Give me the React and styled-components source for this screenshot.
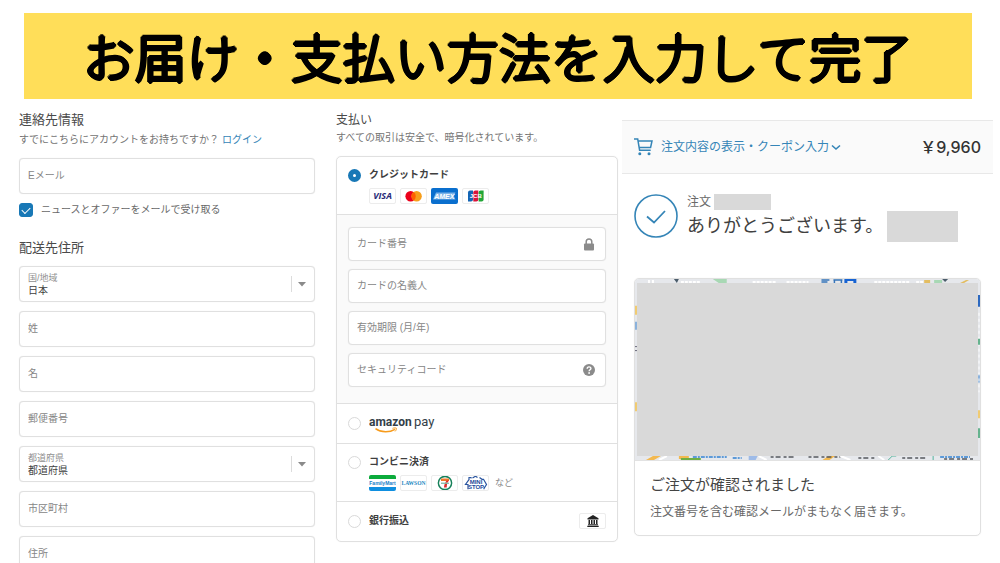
import { useState } from "react";
import styled, { createGlobalStyle } from "styled-components";

const GlobalStyle = createGlobalStyle`
  * {
    box-sizing: border-box;
  }

  body {
    margin: 0;
    background: #fff;
    color: #545454;
    font-family: "Liberation Sans", "Noto Sans CJK JP", sans-serif;
    font-size: 10px;
    line-height: 16px;
  }

  h1, h2, h3, p {
    margin: 0;
    font-weight: 400;
  }

  input, select, button {
    font: inherit;
    color: inherit;
  }
`;

const Page = styled.div`
  height: 100vh;
  overflow: hidden;
`;

const Banner = styled.header`
  margin: 13px 28px 12px 24px;
  padding: 5px 0;
  background: #ffde59;
  text-align: center;

  /* thin strokes thickened on all sides, so the ends come out round */
  h1 {
    font-family: "Noto Sans CJK JP", sans-serif;
    font-size: 52px;
    line-height: 76px;
    font-weight: 300;
    color: #000;
    white-space: nowrap;
    text-shadow: 2px 0 #000, -2px 0 #000, 0 2px #000, 0 -2px #000,
      1px 1px #000, -1px 1px #000, 1px -1px #000, -1px -1px #000;
  }
`;

const Columns = styled.main`
  display: grid;
  grid-template-columns: 317fr 286fr 371fr;
  padding: 0 7px 0 19px;
`;

const Column = styled.section`
  min-width: 0;
  padding-right: ${({ $gap }) => $gap || 0}px;
`;

const Heading = styled.h2`
  font-size: ${({ $small }) => ($small ? 12 : 13)}px;
  line-height: 18px;
  color: #4a4a4a;
  margin-top: ${({ $spaced }) => ($spaced ? 21 : 0)}px;
`;

const SubText = styled.p`
  margin: ${({ $top }) => $top}px 0 10px;
  color: #737373;
  white-space: nowrap;

  a {
    color: #3585b7;
    text-decoration: none;
    margin-left: 3px;
  }
`;

const Field = styled.div`
  display: flex;
  align-items: center;
  height: ${({ $short }) => ($short ? 34 : 36)}px;
  padding: 0 8px;
  border: 1px solid #e0e0e0;
  border-radius: 4px;
  background: #fff;
  box-shadow: 0 0 1px #e4e4e4;

  input {
    flex: 1;
    min-width: 0;
    border: 0;
    padding: 0;
    outline: none;
    background: none;
  }

  input::placeholder {
    color: #868686;
    opacity: 1;
  }

  > svg {
    margin-right: 2px;
  }
`;

const SelectBody = styled.div`
  flex: 1;
  display: flex;
  flex-direction: column;
  padding-top: 2px;

  label {
    font-size: 9px;
    line-height: 12px;
    color: #909090;
  }

  select {
    appearance: none;
    border: 0;
    padding: 0;
    outline: none;
    background: none;
    line-height: 14px;
    color: #3f3f3f;
  }
`;

const SelectArrow = styled.span`
  display: flex;
  align-items: center;
  height: 16px;
  padding-left: 6px;
  border-left: 1px solid #dcdcdc;
`;

const FieldStack = styled.div`
  display: grid;
  gap: ${({ $gap }) => $gap}px;
  margin-top: 9px;
`;

const CheckRow = styled.label`
  display: flex;
  align-items: center;
  gap: 8px;
  margin-top: 8px;
  color: #686868;
`;

const CheckBox = styled.input`
  appearance: none;
  display: grid;
  place-items: center;
  width: 14px;
  height: 14px;
  margin: 0;
  border: 1px solid #d0d0d0;
  border-radius: 3px;

  &:checked {
    background: #1878b6;
    border-color: #1878b6;
  }

  &:checked::after {
    content: "";
    width: 7px;
    height: 4px;
    border: solid #fff;
    border-width: 0 0 1px 1px;
    transform: translateY(-1px) rotate(-45deg);
  }
`;

const PaymentCard = styled.div`
  border: 1px solid #e0e0e0;
  border-radius: 5px;
  box-shadow: 0 0 1px #e4e4e4;
  overflow: hidden;
`;

const Option = styled.div`
  display: grid;
  grid-template-columns: 13px 1fr auto;
  column-gap: 8px;
  row-gap: 5px;
  align-items: center;
  padding: ${({ $compact }) => ($compact ? "11px 11px 12px" : "10px 11px")};

  div + & {
    border-top: 1px solid #e0e0e0;
  }
`;

const Radio = styled.input`
  appearance: none;
  width: 13px;
  height: 13px;
  margin: 0;
  border: 1px solid #d9d9d9;
  border-radius: 50%;
  background: #fff;

  &:checked {
    border: 5px solid #1878b6;
  }
`;

const OptionLabel = styled.label`
  height: 16px;
  font-weight: 700;
  color: #3f3f3f;
`;

const BrandRow = styled.div`
  grid-column: 2 / -1;
  display: flex;
  align-items: center;
  gap: 4px;
`;

const Brand = styled.span`
  display: flex;
  align-items: center;
  justify-content: center;
  width: 27px;
  height: 16px;
  overflow: hidden;
  border: ${({ $plain }) => ($plain ? "0" : "1px solid #ececec")};
  border-radius: 2px;
  background: #fff;
`;

const BrandNote = styled.span`
  margin-left: 2px;
  font-size: 9px;
  color: #888;
`;

const CardPanel = styled.div`
  padding: 3px 11px 16px;
  border-top: 1px solid #e0e0e0;
  background: #fafafa;
`;

const SummaryBar = styled.div`
  display: flex;
  align-items: center;
  justify-content: space-between;
  height: 54px;
  margin-top: 9px;
  padding: 0 12px;
  background: #fafafa;
  border: solid #e8e8e8;
  border-width: 1px 0;
`;

const SummaryToggle = styled.button`
  display: flex;
  align-items: center;
  padding: 0;
  border: 0;
  background: none;
  color: #3585b7;
  font-size: 12px;
  cursor: pointer;

  span {
    margin: 0 2px 0 8px;
  }
`;

const Price = styled.strong`
  font-family: Inter, "Noto Sans CJK JP", sans-serif;
  font-size: 16px;
  font-weight: 500;
  color: #333;
`;

const ThanksRow = styled.div`
  display: flex;
  gap: 9px;
  padding: 20px 12px 0;
`;

const OrderLine = styled.p`
  display: flex;
  align-items: center;
  gap: 3px;
  font-size: 12px;
  color: #6a6a6a;
`;

const Redacted = styled.span`
  flex: none;
  width: ${({ $w }) => $w}px;
  height: ${({ $h }) => $h}px;
  background: #d9d9d9;
`;

const ThanksText = styled.h2`
  display: flex;
  align-items: center;
  gap: 4px;
  font-size: 18px;
  line-height: 32px;
  color: #404040;
  white-space: nowrap;
`;

const ConfirmCard = styled.article`
  margin: 36px 12px 0;
  border: 1px solid #e0e0e0;
  border-radius: 5px;
  box-shadow: 0 0 1px #e4e4e4;
  overflow: hidden;
`;

const MapArea = styled.div`
  position: relative;
  height: 182px;
  padding: 4px 2px;
  border-bottom: 1px solid #e2e2e2;

  svg {
    position: absolute;
    inset: 0;
    width: 100%;
    height: 100%;
  }
`;

const MapCover = styled.div`
  position: relative;
  height: 100%;
  background: #d9d9d9;
`;

const ConfirmBody = styled.div`
  padding: 12px 15px 15px;
  color: #686868;
  font-size: 12px;

  h3 {
    font-size: 15px;
    line-height: 24px;
    margin-bottom: 7px;
    color: #444;
  }
`;

const TextField = ({ label, short, icon }) => (
  <Field $short={short}>
    <input type="text" aria-label={label} placeholder={label} />
    {icon}
  </Field>
);

const SelectField = ({ id, label, value }) => (
  <Field>
    <SelectBody>
      <label htmlFor={id}>{label}</label>
      <select id={id} defaultValue={value}>
        <option>{value}</option>
      </select>
    </SelectBody>
    <SelectArrow>
      <svg width="8" height="5" viewBox="0 0 8 5">
        <path d="M0 0h8L4 4.6z" fill="#8a8a8a" />
      </svg>
    </SelectArrow>
  </Field>
);

const LockIcon = () => (
  <svg width="12" height="13" viewBox="0 0 12 13">
    <path d="M3.2 6V3.8a2.8 2.8 0 0 1 5.6 0V6" fill="none" stroke="#8b8b8b" strokeWidth="1.5" />
    <rect x="1" y="5.5" width="10" height="7" rx="1" fill="#8b8b8b" />
  </svg>
);

const HelpIcon = () => (
  <svg width="12" height="12" viewBox="0 0 12 12">
    <circle cx="6" cy="6" r="6" fill="#8b8b8b" />
    <path d="M4.2 4.7c0-2.4 3.7-2.3 3.7-.2 0 1.3-1.8 1.3-1.8 2.8" fill="none" stroke="#fff" strokeWidth="1.4" />
    <circle cx="6.1" cy="9" r="0.9" fill="#fff" />
  </svg>
);

const VisaLogo = () => (
  <svg width="25" height="14" viewBox="0 0 25 14">
    <text x="12.5" y="10.4" textAnchor="middle" fontFamily="Open Sans, sans-serif" fontSize="9" fontWeight="700" fontStyle="italic" fill="#292b78">VISA</text>
  </svg>
);

const MastercardLogo = () => (
  <svg width="25" height="14" viewBox="0 0 25 14">
    <circle cx="9.6" cy="7.2" r="5.2" fill="#eb001b" />
    <circle cx="15.6" cy="7.2" r="5.2" fill="#f79e1b" />
    <path d="M12.6 2.95a5.2 5.2 0 0 1 0 8.5 5.2 5.2 0 0 1 0-8.5z" fill="#ff5f00" />
  </svg>
);

const AmexLogo = () => (
  <svg width="27" height="16" viewBox="0 0 27 16">
    <rect width="27" height="16" fill="#0a6fce" />
    <path d="M2 11.5 5 4.5h19.5l-1.6 3.5 1.6 3.5z" fill="#7db4e8" />
    <text x="13.3" y="10.7" textAnchor="middle" fontFamily="Liberation Sans, sans-serif" fontSize="7" fontWeight="700" fontStyle="italic" fill="#fff">AMEX</text>
  </svg>
);

const JcbLogo = () => (
  <svg width="25" height="14" viewBox="0 0 25 14">
    <path d="M7 1.5h3v9a2 2 0 0 1-2 2H5V3.5a2 2 0 0 1 2-2z" fill="#1465b4" />
    <path d="M12.3 1.5h3v9a2 2 0 0 1-2 2h-3v-9a2 2 0 0 1 2-2z" fill="#d8143a" />
    <path d="M17.6 1.5h3v9a2 2 0 0 1-2 2h-3v-9a2 2 0 0 1 2-2z" fill="#22a637" />
    <text x="12.8" y="9.2" textAnchor="middle" fontFamily="Liberation Sans, sans-serif" fontSize="6" fontWeight="700" fill="#fff">JCB</text>
  </svg>
);

const AmazonPayLogo = () => (
  <svg width="68" height="20" viewBox="0 0 68 20" role="img" aria-label="amazon pay">
    <g fontFamily="Roboto, sans-serif" fill="#333e48">
      <text x="0" y="11" fontSize="12" fontWeight="700">amazon</text>
      <text x="45" y="11" fontSize="13" fontWeight="400">pay</text>
    </g>
    <path d="M6.5 13.6c6 4.3 14 4 19.5.8" fill="none" stroke="#f79b1c" strokeWidth="1.5" />
    <path d="M23.5 13.3c1.6-.5 3.6-.5 3.9-.1.2.6-.3 2.2-1.3 3.2" fill="none" stroke="#f79b1c" />
  </svg>
);

const FamilyMartLogo = () => (
  <svg width="27" height="16" viewBox="0 0 27 16">
    <rect width="27" height="4" fill="#0cab3c" />
    <rect y="12" width="27" height="4" fill="#0f8fe0" />
    <text x="13.5" y="9.8" textAnchor="middle" fontFamily="Liberation Sans, sans-serif" fontSize="5" fontWeight="700" fill="#1680c8">FamilyMart</text>
  </svg>
);

const LawsonLogo = () => (
  <svg width="27" height="14" viewBox="0 0 27 14">
    <text x="13.5" y="9.2" textAnchor="middle" fontFamily="Liberation Serif, serif" fontSize="6" fontWeight="700" fill="#2688c2">LAWSON</text>
  </svg>
);

const SevenLogo = () => (
  <svg width="16" height="16" viewBox="0 0 16 16">
    <circle cx="8" cy="8" r="6.6" fill="#fff" stroke="#168059" strokeWidth="1.5" />
    <path d="M4 3.6h8V6H4z" fill="#f0782a" />
    <path d="M9.6 5.5H12c-1.7 2.2-2.1 3.7-2.3 7H7c.2-3 1-5 2.6-7z" fill="#dd2b2b" />
    <path d="M2.6 7.4h10.8v1.5H2.6z" fill="#fff" opacity="0.8" />
    <path d="M4 8.2h8" stroke="#168059" strokeWidth="0.7" />
  </svg>
);

const MiniStopLogo = () => (
  <svg width="25" height="16" viewBox="0 0 25 16">
    <path d="M5 14.2V9.5H2.5L6 4.5V2.5h2v1M9.5 3l3-1.8 2 1.3M16.5 2.5l2.5 1.8h1.5L23.5 9.5 21 13.5v.7" fill="none" stroke="#2a55a0" strokeWidth="1.2" />
    <g fontFamily="Liberation Sans, sans-serif" fontSize="6" fontWeight="700" fill="#1e4a9a" textAnchor="middle">
      <text x="13" y="8.8">MINI</text>
      <text x="13" y="14">STOP</text>
    </g>
  </svg>
);

const BankIcon = () => (
  <svg width="12" height="12" viewBox="0 0 12 12" fill="#222">
    <path d="M6 0 11.5 3.2V4.5H.5V3.2z" />
    <path d="M1.5 5H3v4H1.5zM4 5h1.5v4H4zM6.5 5H8v4H6.500zM9 5h1.5v4H9zM1 9.3h10v.9H1zM.3 10.7h11.4V12H.3z" />
  </svg>
);

const CartIcon = () => (
  <svg width="19" height="18" viewBox="0 0 19 18">
    <path d="M0 .9h3.7L5.6 12.2h11.1M4 2.9h14L16.6 9.4H5.2" fill="none" stroke="#3585b7" strokeWidth="1.5" />
    <circle cx="5.8" cy="15.8" r="1.5" fill="#3585b7" />
    <circle cx="15" cy="15.8" r="1.5" fill="#3585b7" />
  </svg>
);

const ChevronIcon = () => (
  <svg width="10" height="7" viewBox="0 0 10 7">
    <path d="M1 1.5 5 5l4-3.5" fill="none" stroke="#3585b7" strokeWidth="1.6" />
  </svg>
);

const CheckCircle = () => (
  <svg width="44" height="44" viewBox="0 0 44 44">
    <circle cx="22" cy="22" r="21" fill="none" stroke="#3585b7" strokeWidth="1.6" />
    <path d="M13 22.5 20 28.5 31 17" fill="none" stroke="#3585b7" strokeWidth="1.8" />
  </svg>
);

const MapTiles = () => (
  <svg viewBox="0 0 346 182" preserveAspectRatio="none">
    <rect width="346" height="182" fill="#e6e8ec" />
    <path d="M14 1v3M18 1v3M46 3h20M118 3h24M152 3h22M240 3h36M282 3h12" stroke="#fff" strokeWidth="2" strokeDasharray="3 1" />
    <path d="M39 0h5l-2 4zM308 0h6l-3 3z" fill="#4b5d6b" />
    <path d="M78 0h14v4H84zM300 1h8v3h-8z" fill="#a8d8b4" />
    <path d="M187 1h8M187 3h6M199 1h9M200 1v3M207 1v3" stroke="#3674b8" strokeWidth="1.5" />
    <path d="M210 0h12v4h-3V2h-6v2h-3z" fill="#1763d2" />
    <path d="M326 4l6-3h3l-5 3zM290 1h6v3h-6z" fill="#e3bd62" />
    <path d="M0 27h2v9H0zM0 124h2v9H0z" fill="#f0cb72" />
    <path d="M0 43h2v8H0zM344 96h2v8h-2z" fill="#8bb2dc" />
    <path d="M0 68h2M0 72h2" stroke="#667" />
    <path d="M344 16h2v12h-2z" fill="#2c69c0" />
    <path d="M345 34v80" stroke="#fff" strokeDasharray="3 3" />
    <path d="M344 60h2v6h-2zM344 150h2v10h-2z" fill="#65b38e" />
    <path d="M344 132h2v8h-2z" fill="#f0cb72" />
    <path d="M11 182l7-4h8l-7 4zM44 178h10v3H44zM188 182l6-4h7l-6 4z" fill="#f3b950" />
    <path d="M46 180h20v2H46z" fill="#6fae45" />
    <path d="M58 179h34M98 180h9M306 179h30" stroke="#5d9ad8" strokeWidth="2" strokeDasharray="4 1 2 1" />
    <path d="M114 178h9l-2 4h-7z" fill="#9ebbe8" />
    <path d="M136 179h26M174 179h32M224 180h18M268 180h26M310 181h30" stroke="#55585d" strokeWidth="1.5" strokeDasharray="3 2 5 3" />
    <path d="M254 182l4-4h4M299 178v4" stroke="#55b39a" fill="none" />
    <path d="M24 182l8-4M124 178l8 4M206 178l10 4M244 178l6 4" stroke="#fff" strokeWidth="2" />
  </svg>
);

const App = () => {
  const [method, setMethod] = useState("card");
  const [newsletter, setNewsletter] = useState(true);

  const radioProps = (id) => ({
    type: "radio",
    name: "payment",
    id,
    checked: method === id,
    onChange: () => setMethod(id),
  });

  return (
    <>
      <GlobalStyle />
      <Page>
        <Banner>
          <h1>お届け・支払い方法を入力して完了</h1>
        </Banner>

        <Columns>
          <Column $gap={21}>
            <Heading>連絡先情報</Heading>
            <SubText $top={3}>
              すでにこちらにアカウントをお持ちですか？
              <a href="#login">ログイン</a>
            </SubText>
            <TextField label="Eメール" />
            <CheckRow>
              <CheckBox
                type="checkbox"
                checked={newsletter}
                onChange={(e) => setNewsletter(e.target.checked)}
              />
              ニュースとオファーをメールで受け取る
            </CheckRow>

            <Heading $spaced>配送先住所</Heading>
            <FieldStack $gap={9}>
              <SelectField id="country" label="国/地域" value="日本" />
              <TextField label="姓" />
              <TextField label="名" />
              <TextField label="郵便番号" />
              <SelectField id="prefecture" label="都道府県" value="都道府県" />
              <TextField label="市区町村" />
              <TextField label="住所" />
            </FieldStack>
          </Column>

          <Column $gap={4}>
            <Heading $small>支払い</Heading>
            <SubText $top={1}>すべての取引は安全で、暗号化されています。</SubText>
            <PaymentCard>
              <Option>
                <Radio {...radioProps("card")} />
                <OptionLabel htmlFor="card">クレジットカード</OptionLabel>
                <BrandRow>
                  <Brand><VisaLogo /></Brand>
                  <Brand><MastercardLogo /></Brand>
                  <Brand $plain><AmexLogo /></Brand>
                  <Brand><JcbLogo /></Brand>
                </BrandRow>
              </Option>
              <CardPanel>
                <FieldStack $gap={8}>
                  <TextField short label="カード番号" icon={<LockIcon />} />
                  <TextField short label="カードの名義人" />
                  <TextField short label="有効期限 (月/年)" />
                  <TextField short label="セキュリティコード" icon={<HelpIcon />} />
                </FieldStack>
              </CardPanel>
              <Option $compact>
                <Radio {...radioProps("amazon")} />
                <OptionLabel htmlFor="amazon">
                  <AmazonPayLogo />
                </OptionLabel>
              </Option>
              <Option>
                <Radio {...radioProps("store")} />
                <OptionLabel htmlFor="store">コンビニ決済</OptionLabel>
                <BrandRow>
                  <Brand $plain><FamilyMartLogo /></Brand>
                  <Brand><LawsonLogo /></Brand>
                  <Brand><SevenLogo /></Brand>
                  <Brand><MiniStopLogo /></Brand>
                  <BrandNote>など</BrandNote>
                </BrandRow>
              </Option>
              <Option $compact>
                <Radio {...radioProps("bank")} />
                <OptionLabel htmlFor="bank">銀行振込</OptionLabel>
                <Brand><BankIcon /></Brand>
              </Option>
            </PaymentCard>
          </Column>

          <Column>
            <SummaryBar>
              <SummaryToggle type="button">
                <CartIcon />
                <span>注文内容の表示・クーポン入力</span>
                <ChevronIcon />
              </SummaryToggle>
              <Price>￥9,960</Price>
            </SummaryBar>

            <ThanksRow>
              <CheckCircle />
              <div>
                <OrderLine>
                  注文
                  <Redacted $w={57} $h={16} />
                </OrderLine>
                <ThanksText>
                  ありがとうございます。
                  <Redacted $w={71} $h={31} />
                </ThanksText>
              </div>
            </ThanksRow>

            <ConfirmCard>
              <MapArea>
                <MapTiles />
                <MapCover />
              </MapArea>
              <ConfirmBody>
                <h3>ご注文が確認されました</h3>
                <p>注文番号を含む確認メールがまもなく届きます。</p>
              </ConfirmBody>
            </ConfirmCard>
          </Column>
        </Columns>
      </Page>
    </>
  );
};

export default App;
